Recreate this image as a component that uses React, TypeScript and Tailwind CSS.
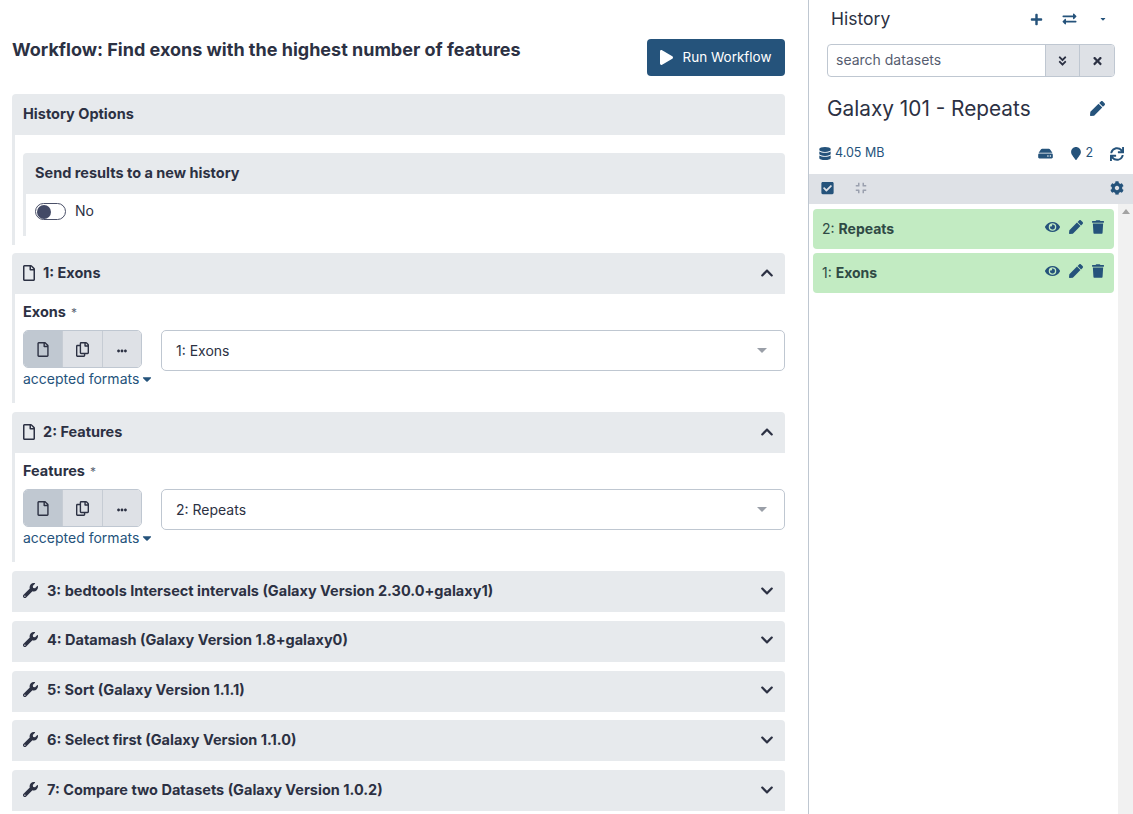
import React from 'react';
import {
  FaAngleDoubleDown,
  FaCaretDown,
  FaCheckSquare,
  FaChevronDown,
  FaChevronUp,
  FaCog,
  FaCompress,
  FaDatabase,
  FaEllipsisH,
  FaExchangeAlt,
  FaEye,
  FaHdd,
  FaMapMarker,
  FaPen,
  FaPlay,
  FaPlus,
  FaRegCopy,
  FaRegFile,
  FaSync,
  FaTimes,
  FaTrash,
  FaWrench,
} from 'react-icons/fa';

const tools = [
  '3: bedtools Intersect intervals (Galaxy Version 2.30.0+galaxy1)',
  '4: Datamash (Galaxy Version 1.8+galaxy0)',
  '5: Sort (Galaxy Version 1.1.1)',
  '6: Select first (Galaxy Version 1.1.0)',
  '7: Compare two Datasets (Galaxy Version 1.0.2)',
];

function InputStep({ title, label, value }: { title: string; label: string; value: string }) {
  return (
    <div className="mb-[9px]">
      <div className="h-[41px] bg-[#e7eaed] rounded-t-[4px] flex items-center pl-[11px] pr-[11px] pb-[2px]">
        <FaRegFile className="w-[12px] h-[16px] mr-[8px]" />
        <span className="font-bold text-[14.5px] grow">{title}</span>
        <FaChevronUp className="w-[14px] h-[14px]" />
      </div>
      <div className="border-l-[3px] border-[#e7eaed] h-[109px] pl-[8px] pt-[10px]">
        <div className="h-[17px] flex items-center text-[14.5px] font-bold leading-none">
          {label}
          <span className="font-normal text-[12px] ml-[5px] text-[#5c6474]">*</span>
        </div>
        <div className="flex mt-[9px]">
          <div className="w-[119px] h-[38px] flex rounded-[5px] border border-[#bfc7d1] overflow-hidden shrink-0">
            <div className="w-[38px] bg-[#c0c8d1] flex items-center justify-center">
              <FaRegFile className="w-[12px] h-[15px]" />
            </div>
            <div className="w-[40px] bg-[#dee1e6] border-l border-[#c6ccd4] flex items-center justify-center">
              <FaRegCopy className="w-[13px] h-[15px]" />
            </div>
            <div className="grow bg-[#dee1e6] border-l border-[#c6ccd4] flex items-center justify-center pt-[4px]">
              <FaEllipsisH className="w-[10px] h-[10px]" />
            </div>
          </div>
          <div className="ml-[19px] w-[624px] h-[41px] rounded-[5px] border border-[#bfc7d1] flex items-center pl-[14px] pr-[17px] text-[14px] text-[#2c3143]">
            <span className="grow">{value}</span>
            <span className="w-0 h-0 border-x-[5px] border-x-transparent border-t-[5px] border-t-[#9a9fa8]" />
          </div>
        </div>
        <div className="-mt-[2px] flex items-center text-[14px] leading-[20px] text-[#25537b]">
          accepted formats
          <FaCaretDown className="w-[14px] h-[14px] ml-[1px]" />
        </div>
      </div>
    </div>
  );
}

function DatasetRow({ num, name }: { num: string; name: string }) {
  return (
    <div className="h-[40px] mb-[4px] w-[301px] rounded-[4px] bg-[#c2ebc2] flex items-center pl-[9px] pr-[10px] pb-[2px] text-[14px] text-[#2f4a45]">
      <span className="grow">
        {num}: <b>{name}</b>
      </span>
      <div className="flex items-center gap-[9px] text-[#25537b] -mt-[3px]">
        <FaEye className="w-[15px] h-[14px]" />
        <FaPen className="w-[14px] h-[14px]" />
        <FaTrash className="w-[12px] h-[14px]" />
      </div>
    </div>
  );
}

export default function App() {
  return (
    <div className="w-[1133px] h-[814px] overflow-hidden flex bg-white text-[#2c3143] font-['Inter','Noto_Sans',sans-serif]">
      <div className="w-[808px] shrink-0 pl-[12px] pr-[23px] pt-[39px]">
        <div className="flex items-start justify-between h-[55px]">
          <h1 className="text-[18px] leading-[22px] font-bold">
            Workflow: Find exons with the highest number of features
          </h1>
          <button
            type="button"
            className="w-[138px] h-[37px] rounded-[4px] bg-[#25537b] text-white text-[13.5px] pb-[1px] flex items-center justify-center gap-[9px]"
          >
            <FaPlay className="w-[13px] h-[15px]" />
            Run Workflow
          </button>
        </div>

        <div className="mb-[8px]">
          <div className="h-[41px] bg-[#e7eaed] rounded-t-[4px] flex items-center pl-[11px] pb-[2px] font-bold text-[14.5px]">
            History Options
          </div>
          <div className="border-l-[3px] border-[#e7eaed] h-[110px] pl-[8px] pt-[18px]">
            <div className="h-[41px] bg-[#e7eaed] rounded-t-[4px] flex items-center pl-[12px] pb-[2px] font-bold text-[14.5px]">
              Send results to a new history
            </div>
            <div className="border-l-[3px] border-[#e7eaed] h-[42px] pl-[9px] flex items-start pt-[8px] text-[14px]">
              <span className="w-[31px] h-[17px] mt-[1px] rounded-full border border-[#4a5068] flex items-center pl-[1px]">
                <span className="w-[14px] h-[14px] rounded-full bg-[#434a66]" />
              </span>
              <span className="ml-[9px] leading-[18px]">No</span>
            </div>
          </div>
        </div>

        <InputStep title="1: Exons" label="Exons" value="1: Exons" />
        <InputStep title="2: Features" label="Features" value="2: Repeats" />

        {tools.map(tool => (
          <div
            key={tool}
            className="h-[41px] mb-[8.8px] bg-[#e7eaed] rounded-t-[4px] flex items-center pl-[11px] pr-[11px] pb-[2px]"
          >
            <FaWrench className="w-[15px] h-[15px] mr-[9px] -mt-[1px]" />
            <span className="font-bold text-[14.5px] grow">{tool}</span>
            <FaChevronDown className="w-[14px] h-[14px]" />
          </div>
        ))}
      </div>

      <div className="grow border-l border-[#bfc7d1] flex flex-col min-w-0">
        <div className="h-[44px] flex items-center pl-[22px] text-[#25537b] pb-[6px]">
          <span className="text-[#2c3143] text-[17.5px] grow">History</span>
          <FaPlus className="w-[13px] h-[13px]" />
          <FaExchangeAlt className="w-[15px] h-[14px] ml-[19px]" />
          <FaCaretDown className="w-[8px] h-[8px] ml-[22px] mr-[26px]" />
        </div>
        <div className="ml-[18px] w-[288px] h-[33px] flex rounded-[4px] border border-[#bfc7d1] overflow-hidden text-[14px]">
          <div className="grow pl-[8px] pb-[2px] flex items-center text-[#565d70]">search datasets</div>
          <div className="w-[34px] bg-[#dee1e6] border-l border-[#bfc7d1] flex items-center justify-center">
            <FaAngleDoubleDown className="w-[11px] h-[12px]" />
          </div>
          <div className="w-[35px] bg-[#dee1e6] border-l border-[#bfc7d1] flex items-center justify-center">
            <FaTimes className="w-[11px] h-[12px]" />
          </div>
        </div>
        <div className="h-[63px] flex items-center pl-[18px] pr-[28px] text-[20.8px] text-[#2c3143]">
          <span className="grow">Galaxy 101 - Repeats</span>
          <FaPen className="w-[15px] h-[15px] text-[#25537b]" />
        </div>
        <div className="h-[26px] flex items-center pl-[10px] pr-[9px] pt-[1px] text-[12.5px] text-[#25537b]">
          <FaDatabase className="w-[12px] h-[13px] mr-[4px]" />
          <span className="grow">4.05 MB</span>
          <FaHdd className="w-[15px] h-[13px] mr-[3px]" />
          <FaMapMarker className="w-[10px] h-[13px] ml-[15px]" />
          <span className="ml-[4px]">2</span>
          <FaSync className="w-[14px] h-[14px] ml-[17px]" />
        </div>
        <div className="h-[30px] mt-[8px] bg-[#dee1e6] flex items-center pl-[12px] pr-[9px] pb-[2px] text-[#25537b]">
          <FaCheckSquare className="w-[13px] h-[14px]" />
          <FaCompress className="w-[12px] h-[12px] ml-[21px] text-[#9aa0ae] grow-0" />
          <span className="grow" />
          <FaCog className="w-[14px] h-[14px]" />
        </div>
        <div className="grow flex">
          <div className="grow pl-[4px] pt-[5px]">
            <DatasetRow num="2" name="Repeats" />
            <DatasetRow num="1" name="Exons" />
          </div>
          <div className="w-[15px] bg-[#f1f1f1] shrink-0 flex justify-center pt-[5px]">
            <span className="w-0 h-0 border-x-[4px] border-x-transparent border-b-[5px] border-b-[#a3a3a3]" />
          </div>
        </div>
      </div>
    </div>
  );
}
